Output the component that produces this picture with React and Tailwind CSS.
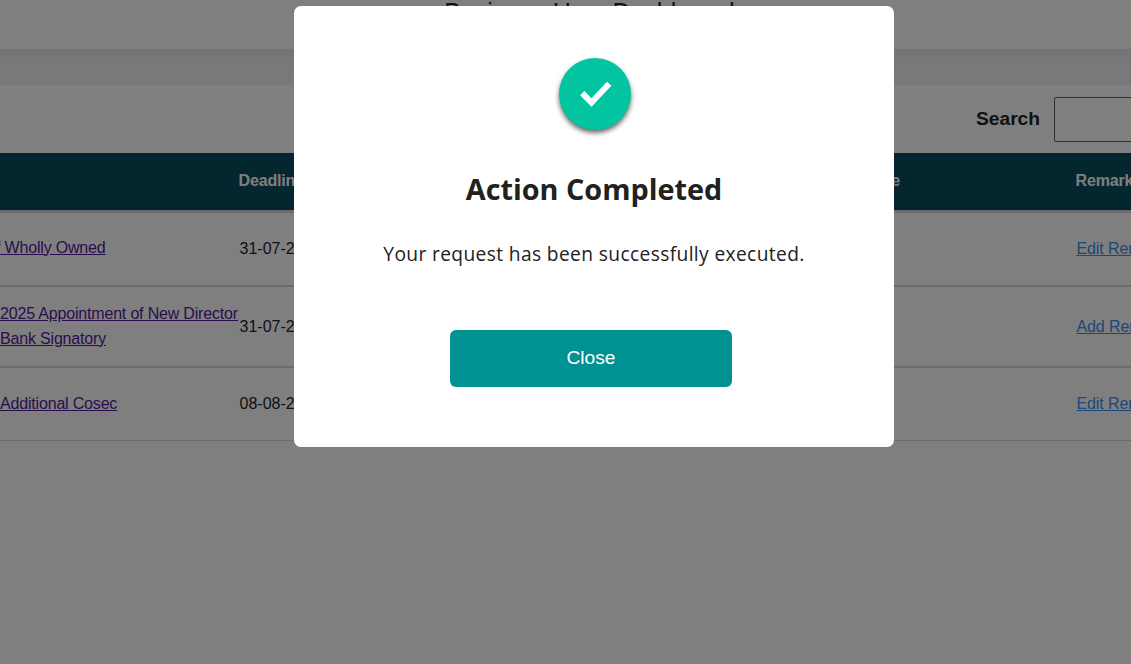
import React, { useState } from "react";

const rows = [
  {
    name: ["f Wholly Owned"],
    nameClass: "-ml-[4px] pb-[4px]",
    deadline: "31-07-2025",
    remark: "Edit Remark",
    rowClass: "h-[74px] border-b-2",
  },
  {
    name: ["2025 Appointment of New Director", "Bank Signatory"],
    nameClass: "pb-[2px]",
    deadline: "31-07-2025",
    remark: "Add Remark",
    rowClass: "h-[81px] border-b-2",
  },
  {
    name: ["Additional Cosec"],
    nameClass: "pb-[2px]",
    deadline: "08-08-2025",
    remark: "Edit Remark",
    rowClass: "h-[73px] border-b",
  },
];

const SuccessIcon = () => (
  <div className="flex h-[72px] w-[72px] items-center justify-center rounded-full bg-[#03c4a1] shadow-[0_3px_5px_rgba(0,0,0,0.6)]">
    <svg width="72" height="72" viewBox="0 0 72 72" fill="none">
      <path d="M23.2 35.2L32.5 44.5L50.2 25.8" stroke="#fff" strokeWidth="6" />
    </svg>
  </div>
);

const Modal = ({ onClose }) => (
  <div className="fixed inset-0 flex items-start bg-black/50 pt-[6px] pl-[294px]">
    <div className="flex h-[441px] w-[600px] flex-col items-center rounded-[7px] bg-white pt-[52px] text-[#212121]">
      <div className="ml-[2px]">
        <SuccessIcon />
      </div>
      <h2 className="mt-[39px] font-['Open_Sans',sans-serif] text-[28.8px] leading-[40px] font-bold whitespace-nowrap">
        Action Completed
      </h2>
      <p className="mt-[30px] font-['Open_Sans',sans-serif] text-[19.2px] leading-[30px] tracking-[0.37px] whitespace-nowrap">
        Your request has been successfully executed.
      </p>
      <button
        onClick={onClose}
        className="mt-[61px] mr-[6px] h-[57px] w-[282px] rounded-md bg-[#009193] text-[19.2px] text-white"
      >
        Close
      </button>
    </div>
  </div>
);

const App = () => {
  const [open, setOpen] = useState(true);
  const [search, setSearch] = useState("");

  return (
    <div className="h-screen overflow-hidden bg-white font-['Liberation_Sans',Arial,sans-serif] text-base text-[#212529]">
      <header className="h-[49px] overflow-hidden text-center">
        <h1 className="-mt-[5px] ml-[48px] text-[25px] leading-[34px] whitespace-nowrap">
          Business User Dashboard
        </h1>
      </header>
      <div className="h-9 bg-linear-to-b from-[#e6e7e9] to-[#eff2f6] to-50%" />

      <div className="flex h-[68px] items-center pl-[976px]">
        <label htmlFor="search" className="w-[78px] shrink-0 text-[19.2px] font-bold">
          Search
        </label>
        <input
          id="search"
          value={search}
          onChange={(e) => setSearch(e.target.value)}
          className="h-[45px] w-[200px] shrink-0 rounded-xs border border-[#606060]"
        />
      </div>

      <div className="grid h-[60px] grid-cols-[239px_597px_240px_100px] items-center border-b-3 border-[#d6d6d6] bg-[#064c5e] pb-[2px] font-bold tracking-[-0.15px] text-white">
        <span />
        <span className="-ml-[0.5px]">Deadline</span>
        <span className="-ml-[6px] w-[70px] text-right">Date</span>
        <span className="-ml-[0.5px]">Remarks</span>
      </div>

      {rows.map((row, index) => (
        <div
          key={index}
          className={`grid grid-cols-[239px_837px_100px] items-center border-[#d9d9d9] ${row.rowClass}`}
        >
          <a
            href="#"
            className={`leading-[25px] tracking-[-0.18px] whitespace-nowrap text-[#551a9b] underline ${row.nameClass}`}
          >
            {row.name.map((line) => (
              <span key={line} className="block">
                {line}
              </span>
            ))}
          </a>
          <span className="pl-[0.5px]">{row.deadline}</span>
          <a
            href="#"
            className="pl-[0.5px] tracking-[-0.1px] whitespace-nowrap text-[#3490f5] underline"
          >
            {row.remark}
          </a>
        </div>
      ))}

      {open && <Modal onClose={() => setOpen(false)} />}
    </div>
  );
};

export default App;
